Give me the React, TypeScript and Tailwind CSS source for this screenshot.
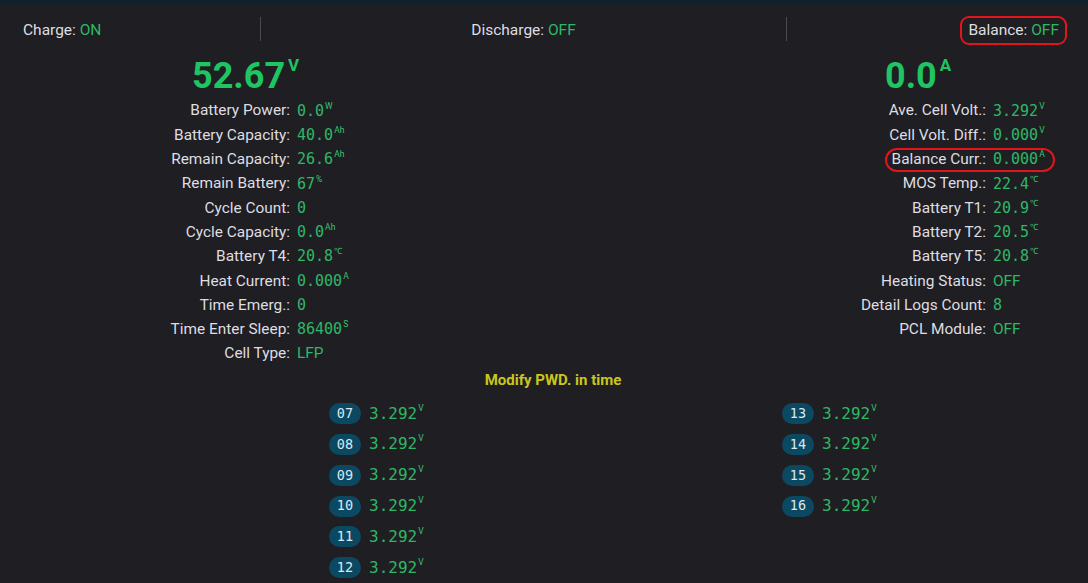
import React from "react";

type Row = { label: string; value: string; unit?: string; mono?: boolean; ring?: boolean };

const leftRows: Row[] = [
  { label: "Battery Power:", value: "0.0", unit: "W", mono: true },
  { label: "Battery Capacity:", value: "40.0", unit: "Ah", mono: true },
  { label: "Remain Capacity:", value: "26.6", unit: "Ah", mono: true },
  { label: "Remain Battery:", value: "67", unit: "%", mono: true },
  { label: "Cycle Count:", value: "0", mono: true },
  { label: "Cycle Capacity:", value: "0.0", unit: "Ah", mono: true },
  { label: "Battery T4:", value: "20.8", unit: "℃", mono: true },
  { label: "Heat Current:", value: "0.000", unit: "A", mono: true },
  { label: "Time Emerg.:", value: "0", mono: true },
  { label: "Time Enter Sleep:", value: "86400", unit: "S", mono: true },
  { label: "Cell Type:", value: "LFP" },
];

const rightRows: Row[] = [
  { label: "Ave. Cell Volt.:", value: "3.292", unit: "V", mono: true },
  { label: "Cell Volt. Diff.:", value: "0.000", unit: "V", mono: true },
  { label: "Balance Curr.:", value: "0.000", unit: "A", mono: true, ring: true },
  { label: "MOS Temp.:", value: "22.4", unit: "℃", mono: true },
  { label: "Battery T1:", value: "20.9", unit: "℃", mono: true },
  { label: "Battery T2:", value: "20.5", unit: "℃", mono: true },
  { label: "Battery T5:", value: "20.8", unit: "℃", mono: true },
  { label: "Heating Status:", value: "OFF" },
  { label: "Detail Logs Count:", value: "8", mono: true },
  { label: "PCL Module:", value: "OFF" },
];

const leftCells = ["07", "08", "09", "10", "11", "12"];
const rightCells = ["13", "14", "15", "16"];

const SANS = "font-['Roboto','Liberation_Sans',sans-serif]";
const MONO = "font-['DejaVu_Sans_Mono','Liberation_Mono',monospace]";

function Value({ row }: { row: Row }) {
  return (
    <span className="inline-flex items-start">
      <span
        className={
          row.mono
            ? `${MONO} text-[15px] leading-none text-[#2db866]`
            : `${SANS} text-[15.4px] leading-none text-[#2db866]`
        }
      >
        {row.value}
      </span>
      {row.unit && (
        <span className={`${SANS} text-[8.5px] leading-none -mt-[2px] ml-[1px] text-[#3cc474]`}>
          {row.unit}
        </span>
      )}
    </span>
  );
}

function DataRow({ row, labelWidth, ringLeft }: { row: Row; labelWidth: string; ringLeft?: string }) {
  return (
    <div className="relative flex h-[24.3px] items-center">
      <div className={`${labelWidth} shrink-0 text-right text-[15.4px] leading-none text-[#dedde2]`}>
        {row.label}
      </div>
      <div className="ml-[7px] flex items-center">
        <Value row={row} />
      </div>
      {row.ring && (
        <span
          className={`pointer-events-none absolute top-0 h-[24px] w-[170px] rounded-full border-2 border-[#e3141c] ${ringLeft ?? ""}`}
        />
      )}
    </div>
  );
}

function Cell({ id }: { id: string }) {
  return (
    <div className="flex h-[30.8px] items-center">
      <span
        className={`${MONO} flex h-[21px] w-[32px] items-center justify-center rounded-full bg-[#0b4962] text-[13.5px] leading-none text-[#dbe7ee]`}
      >
        {id}
      </span>
      <span className="ml-[8px] inline-flex items-start">
        <span className={`${MONO} text-[16px] leading-none text-[#2db866]`}>3.292</span>
        <span className={`${SANS} text-[8.5px] leading-none -mt-[2px] ml-[1px] text-[#3cc474]`}>V</span>
      </span>
    </div>
  );
}

export default function App() {
  return (
    <div className={`${SANS} h-[583px] w-[1088px] overflow-hidden bg-[#1f1e23] text-[#dedde2]`}>
      <div className="h-[5px] bg-[#11202a]" />

      {/* status bar */}
      <div className="flex h-[48px] items-center text-[15.5px] leading-none">
        <div className="mt-[3px] w-[260px] pl-[23px]">
          Charge: <span className="text-[#2db866]">ON</span>
        </div>
        <div className="h-[24px] w-px bg-[#4b4a50]" />
        <div className="mt-[3px] flex flex-1 justify-center">
          <span>
            Discharge: <span className="text-[#2db866]">OFF</span>
          </span>
        </div>
        <div className="h-[24px] w-px bg-[#4b4a50]" />
        <div className="mt-[3px] flex w-[301px] justify-end pr-[21px]">
          <span className="flex h-[29px] items-center rounded-[9px] border-2 border-[#e3141c] px-[6px]">
            Balance:&nbsp;<span className="text-[#2db866]">OFF</span>
          </span>
        </div>
      </div>

      {/* summary panels */}
      <div className="flex">
        <div className="w-[544px]">
          <div className="mt-[5px] flex h-[41px] items-start pl-[192px]">
            <span className="text-[36px] font-bold leading-[36px] text-[#1fc463]">52.67</span>
            <span className="-mt-[1px] ml-[3px] text-[17px] font-bold leading-none text-[#1fc463]">V</span>
          </div>
          {leftRows.map((r) => (
            <DataRow key={r.label} row={r} labelWidth="w-[290px]" />
          ))}
        </div>
        <div className="flex-1">
          <div className="mt-[5px] flex h-[41px] items-start pl-[341px]">
            <span className="text-[36px] font-bold leading-[36px] text-[#1fc463]">0.0</span>
            <span className="-mt-[1px] ml-[3px] text-[17px] font-bold leading-none text-[#1fc463]">A</span>
          </div>
          {rightRows.map((r) => (
            <DataRow key={r.label} row={r} labelWidth="w-[442px]" ringLeft="left-[341px]" />
          ))}
        </div>
      </div>

      <div className="flex h-[32px] items-center justify-center pb-[4px] pl-[18px] text-[15px] font-bold leading-none text-[#c9c61c]">
        Modify PWD. in time
      </div>

      {/* cell voltages */}
      <div className="grid grid-cols-[453px_1fr] pl-[329px]">
        <div>
          {leftCells.map((c) => (
            <Cell key={c} id={c} />
          ))}
        </div>
        <div>
          {rightCells.map((c) => (
            <Cell key={c} id={c} />
          ))}
        </div>
      </div>
    </div>
  );
}
